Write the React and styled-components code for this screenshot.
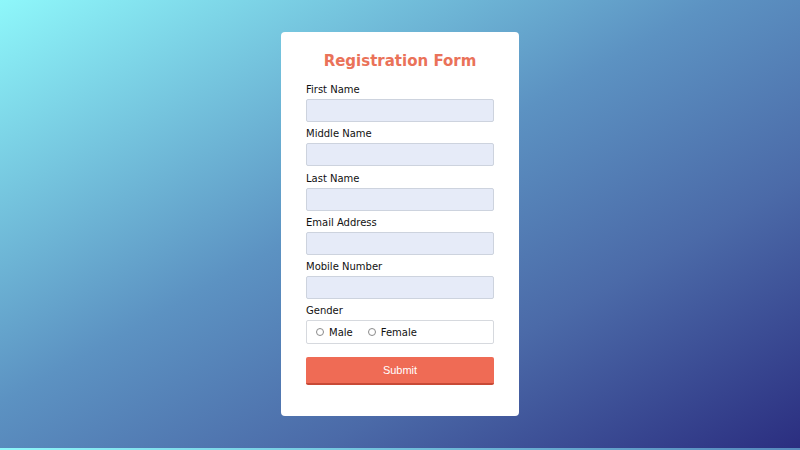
import React from 'react';
import styled, { createGlobalStyle } from 'styled-components';

const GlobalStyle = createGlobalStyle`
  html, body {
    margin: 0;
    padding: 0;
    height: 100%;
  }
  body {
    font-family: 'DejaVu Sans', sans-serif;
    background: linear-gradient(to bottom right, #8ef7fa 0%, #5c92c2 45%, #4b6aa8 70%, #2b2e80 100%);
    background-size: 800px 448px;
    background-repeat: repeat;
  }
`;

const Page = styled.div`
  height: 448px;
  display: flex;
  align-items: center;
  justify-content: center;
`;

const Card = styled.form`
  width: 238px;
  box-sizing: border-box;
  background: #fff;
  border-radius: 4px;
  padding: 21px 25px 30.5px;
  display: flex;
  flex-direction: column;
`;

const Title = styled.h1`
  margin: 0 0 13.5px;
  font-size: 15px;
  font-weight: bold;
  line-height: 17.5px;
  text-align: center;
  color: #ea7259;
`;

const Group = styled.div`
  display: flex;
  flex-direction: column;
  margin-bottom: ${p => p.last ? '0' : '6.3px'};
`;

const Label = styled.label`
  font-size: 10px;
  line-height: 12px;
  color: #111;
  margin-bottom: 3px;
`;

const Input = styled.input`
  height: 23px;
  box-sizing: border-box;
  width: 100%;
  margin: 0;
  background: #e6ebf8;
  border: 1px solid #cdd3de;
  border-radius: 2px;
  outline: none;
`;

const RadioBox = styled.div`
  height: 24px;
  box-sizing: border-box;
  border: 1px solid #d6d9de;
  border-radius: 2px;
  display: flex;
  align-items: center;
  padding-left: 9px;
  gap: 15px;
`;

const RadioOption = styled.label`
  display: flex;
  align-items: center;
  font-size: 10px;
  color: #111;
  gap: 5px;
`;

const Radio = styled.span`
  width: 8px;
  height: 8px;
  box-sizing: border-box;
  border: 1px solid #8a8a8a;
  border-radius: 50%;
  background: #fff;
`;

const Submit = styled.button`
  margin-top: 13px;
  height: 28px;
  box-sizing: border-box;
  width: 100%;
  background: #ef6b55;
  border: none;
  border-bottom: 2px solid #c84a36;
  border-radius: 2px;
  color: #fff;
  font-family: 'Liberation Sans', Arial, sans-serif;
  font-size: 11px;
  padding: 0;
`;

const fields = ['First Name', 'Middle Name', 'Last Name', 'Email Address', 'Mobile Number'];

export default function App() {
  return (
    <>
      <GlobalStyle />
      <Page>
        <Card onSubmit={e => e.preventDefault()}>
          <Title>Registration Form</Title>
          {fields.map(f => (
            <Group key={f}>
              <Label>{f}</Label>
              <Input type="text" />
            </Group>
          ))}
          <Group last>
            <Label>Gender</Label>
            <RadioBox>
              <RadioOption><Radio />Male</RadioOption>
              <RadioOption><Radio />Female</RadioOption>
            </RadioBox>
          </Group>
          <Submit type="submit">Submit</Submit>
        </Card>
      </Page>
    </>
  );
}
